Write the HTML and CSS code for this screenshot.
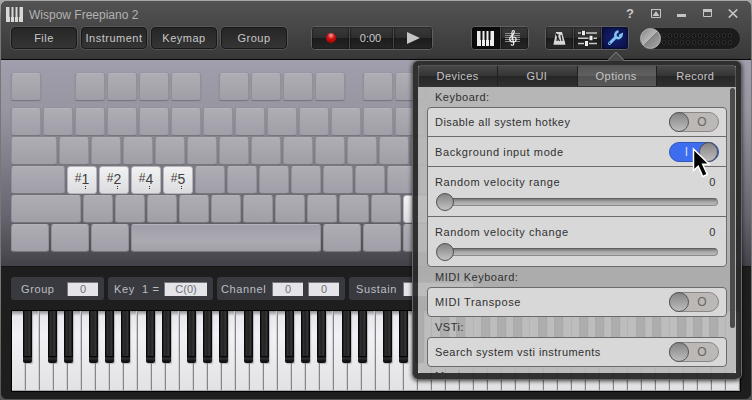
FILE: index.html
```html
<!DOCTYPE html>
<html lang="en">
<head>
<meta charset="utf-8">
<title>Wispow Freepiano 2</title>
<link rel="stylesheet" href="styles.css">
</head>
<body>
<div class="window">
  <header class="header">
    <div class="titlebar">
      <svg class="logo" width="17" height="15" viewBox="0 0 17 15"><path fill="#d8d8d8" d="M0 0h17v15H0z"/><path stroke="#555" d="M4.500 0v15M8.500 0v15M12.500 0v15"/><path stroke="#484848" stroke-width="2" d="M4.500 0v10M8.500 0v10M12.500 0v10"/></svg>
      <span class="title">Wispow Freepiano 2</span>
      <div class="winbtns">
        <span class="help">?</span>
        <svg width="10" height="9" viewBox="0 0 10 9"><path fill="none" stroke="#c4c4c4" d="M.5.5h9v8h-9z"/><path fill="#c4c4c4" d="M0 0h10v1H0zM5 2l3.500 5h-7z"/></svg>
        <svg width="9" height="9" viewBox="0 0 9 9"><path fill="#c4c4c4" d="M0 5h9v3H0z"/></svg>
        <svg width="9" height="9" viewBox="0 0 9 9"><path fill="none" stroke="#c4c4c4" d="M.5.5h8v7h-8z"/><path fill="#c4c4c4" d="M0 0h9v3H0z"/></svg>
        <svg width="10" height="9" viewBox="0 0 10 9"><path stroke="#c4c4c4" stroke-width="1.700" d="M.8.5l8.400 8M9.200.5l-8.400 8"/></svg>
      </div>
    </div>
    <div class="toolbar">
      <nav class="menu">
        <button>File</button><button>Instrument</button><button>Keymap</button><button>Group</button>
      </nav>
      <div class="segments transport">
        <div class="seg"><i class="rec"></i></div>
        <div class="seg time">0:00</div>
        <div class="seg"><svg width="13" height="12" viewBox="0 0 13 12"><path fill="#c6c6c6" d="M0 0l13 6-13 6z"/></svg></div>
      </div>
      <div class="segments views">
        <div class="seg on"><svg width="18" height="15" viewBox="0 0 18 15"><path fill="#eee" d="M0 0h17v15H0z"/><path stroke="#111" d="M4.500 0v15M8.500 0v15M12.500 0v15"/><path stroke="#111" stroke-width="2" d="M4.500 0v9M8.500 0v9M12.500 0v9"/></svg></div>
        <div class="seg"><svg width="18" height="18" viewBox="0 0 18 18" fill="none"><path stroke="#8a8a8a" d="M1 4.500h15M1 6.500h15M1 8.500h15M1 10.500h15M1 12.500h15"/><path stroke="#eee" stroke-width="1.200" d="M9.500 11c-2 0-2-3 .3-3 3.200 0 3.200 5-.5 5C5 13 4.600 9 7.500 7S11 1.500 9.500 1.500 7.500 4 8.200 7l1.500 7.500c.3 2-2.200 2.300-2.700.8"/></svg></div>
      </div>
      <div class="segments tools">
        <div class="seg"><svg width="13" height="13" viewBox="0 0 13 13"><path fill="#d8d8d8" d="M3 0h6l3.500 12.500H.5z"/><path stroke="#222" stroke-width="1.300" d="M6.500 9L3 1.500M4 9l1-7M9 9L8 3"/><path fill="#d8d8d8" d="M1 9.500h11v3H.8z"/></svg></div>
        <div class="seg"><svg width="19" height="16" viewBox="0 0 19 16"><path stroke="#c8c8c8" stroke-width="1.500" d="M0 3h19M0 8.200h19M0 13.500h19"/><path stroke="#222" stroke-width="5" d="M5.500 0v6M13 5v6M8.500 11v5"/><path stroke="#eee" stroke-width="3" d="M5.500 .8v4.500M13 5.800v4.500M8.500 11v5"/></svg></div>
        <div class="seg blue"><svg width="16" height="16" viewBox="0 0 16 16"><path stroke="#80c6f4" stroke-width="3" stroke-linecap="round" d="M2.500 13.500L9 7"/><path fill="none" stroke="#80c6f4" stroke-width="2.500" d="M11.500 1.300C8 2 7.500 6 9.500 7.500s5 0 5.200-3L12.200 5.800"/><circle cx="2.700" cy="13.300" r=".7" fill="#10205f"/></svg></div>
      </div>
      <div class="volume"><div class="dots"></div><i class="volknob"></i></div>
    </div>
  </header>

  <main class="keyboard" id="keyboard"></main>

  <section class="lower">
    <div class="status">
      <div class="stat group"><span>Group</span><b>0</b></div>
      <div class="stat key"><span>Key&nbsp; 1 =</span><b>C(0)</b></div>
      <div class="stat channel"><span>Channel</span><b>0</b><b>0</b></div>
      <div class="stat sustain"><span>Sustain</span><b></b></div>
    </div>
    <div class="piano" id="piano"></div>
  </section>
</div>

<aside class="popup">
  <svg class="notch" width="18" height="10" viewBox="0 0 18 10"><path fill="#4a4a4a" stroke="#858585" d="M0 10.500L9 1l9 9.500"/></svg>
  <div class="tabs"><span>Devices</span><span>GUI</span><span class="active">Options</span><span>Record</span></div>
  <div class="content">
    <h2>Keyboard:</h2>
    <div class="card">
      <div class="row"><span class="tight">Disable all system hotkey</span><div class="toggle"><i></i><em>O</em></div></div>
      <div class="row"><span>Background input mode</span><div class="toggle checked"><em>I</em><i></i></div></div>
      <div class="row tall"><div class="line"><span>Random velocity range</span><span>0</span></div><div class="slider"><i></i></div></div>
      <div class="row tall"><div class="line"><span>Random velocity change</span><span>0</span></div><div class="slider"><i></i></div></div>
    </div>
    <h2>MIDI Keyboard:</h2>
    <div class="card"><div class="row"><span>MIDI Transpose</span><div class="toggle"><i></i><em>O</em></div></div></div>
    <h2>VSTi:</h2>
    <div class="card"><div class="row"><span class="tight">Search system vsti instruments</span><div class="toggle"><i></i><em>O</em></div></div></div>
    <h2 class="last">Master:</h2>
    <div class="scrollbar"></div>
  </div>
</aside>
<svg class="cursor" width="20" height="32" viewBox="0 0 20 32"><path fill="#000" stroke="#fff" stroke-width="1.500" d="M1.500 2v21.500l4.700-4.300 4.600 10.300 4.500-2-4.600-10.200h6.500z"/></svg>
<script src="script.js"></script>
</body>
</html>
```

FILE: styles.css
```css
* { box-sizing: border-box; }
body {
  margin: 0; width: 752px; height: 400px; overflow: hidden; position: relative;
  background: linear-gradient(#a9abaa 0, #777 20px, #777 290px, #555 100%);
  font: 11px/14px "Liberation Sans", Arial, sans-serif;
  letter-spacing: .6px; color: #c8c8c8;
}
i, em, b { font-style: normal; font-weight: normal; display: block; }
.window {
  margin: 1px 1px 0; width: 750px; height: 398px; border-radius: 6px;
  overflow: hidden; display: flex; flex-direction: column; background: #1e1e1e; isolation: isolate;
}
.header { height: 59px; background: linear-gradient(#535353, #383838); border-bottom: 1px solid #080808; flex: none; }
.titlebar { height: 25px; display: flex; align-items: center; padding: 0 13px 0 5px; }
.logo { margin-top: 1px; }
.title { margin-left: 6px; font-size: 12px; letter-spacing: 0; color: #b5b1b1; margin-top: 2px; }
.winbtns { margin-left: auto; display: flex; align-items: center; gap: 16.500px; }
.help { font-size: 13px; font-weight: bold; letter-spacing: 0; }
.toolbar { display: flex; align-items: center; height: 24px; padding-left: 10px; }
.menu { display: flex; gap: 4px; }
.menu button {
  width: 66px; height: 22px; padding: 0; border: 1px solid #191919; border-radius: 4px;
  background: linear-gradient(#262626, #353535); box-shadow: 0 0 0 .6px #666;
  font: inherit; letter-spacing: .5px; color: #c8c8c8;
}
.segments { display: flex; height: 24px; border: 1px solid #606060; border-radius: 4px; overflow: hidden; background: #202020; }
.seg { display: flex; align-items: center; justify-content: center; background: linear-gradient(#393939 0, #2e2e2e 49%, #1b1b1b 50%, #272727); box-shadow: inset 0 0 2px #000; }
.seg + .seg { border-left: 1px solid #484848; }
.transport { width: 122px; margin-left: 24px; }
.transport .seg { width: 37px; }
.transport .seg.time { width: 44px; letter-spacing: 0; padding-right: 2px; }
.transport .seg:last-child { width: 39px; }
.rec { width: 10px; height: 10px; border-radius: 50%; background: radial-gradient(circle at 50% 25%, #f6a0a0, #d01010 40%, #900); }
.views { width: 58px; margin-left: 38px; }
.views .seg { width: 28px; }
.views .seg:last-child { padding-right: 3px; }
.seg.on { background: #0c0c0c; }
.tools { width: 84px; margin-left: 16px; }
.tools .seg { width: 28px; }
.seg.blue { background: radial-gradient(#142274, #090d3e); }
.volume { width: 102px; height: 23px; margin-left: 10px; border-radius: 12px; border: 1px solid #4b4b4b; background: #1b1b1b; display: flex; align-items: center; flex-direction: row-reverse; justify-content: flex-end; margin-top: 1px; }
.volknob { width: 21px; height: 21px; flex: none; border-radius: 50%; border: 1px solid #bbb; background: linear-gradient(135deg, #858585 0, #b8b8b8 49%, #858585 50%, #a8a8a8); }
.dots { width: 72px; height: 14px; background: radial-gradient(circle, #101010 1px, #333 1.800px, transparent 2.500px) 0 0 / 6px 7px; }

.keyboard { height: 206px; flex: none; padding: 13px 0 0 10px; overflow: hidden; background: linear-gradient(#a19fae 0, #97959f 25%, #67656f 75%, #4b4951 95%, #434148); }
.keys { display: flex; gap: 2px; width: 740px; height: 28px; margin-bottom: 1px; }
.keys:first-child { margin-bottom: 7px; }
.keycap {
  flex: none; width: 30px; border-radius: 3px; border: 1px solid #919097; border-top-color: #b4b3ba; border-bottom-color: #77767d;
  background: linear-gradient(#aeadb4, #a09fa7); box-shadow: 0 0 1px #66646e;
}
.keycap.wide { background: linear-gradient(#a19fa9, #abaab2 60%, #a2a1a8); }
.keycap.lit {
  border-color: #b5b4ba; background: linear-gradient(#f2f2f4, #dcdce0); color: #404040;
  font-size: 14px; line-height: 25px; letter-spacing: 0; display: flex; justify-content: center; position: relative;
}
.lit small { font-size: 12px; line-height: 23px; }
.lit::after { content: ""; position: absolute; left: 17px; bottom: 4px; width: 1px; height: 1px; background: #333; box-shadow: 0 -2px #333; }

.lower { flex: 1; background: #1e1e1e; border-top: 1px solid #151515; }
.status { display: flex; gap: 4px; padding: 10px 0 0 10px; }
.stat { height: 23px; border-radius: 3px; background: #393a40; display: flex; align-items: center; color: #bdbdc0; flex: none; }
.stat b { height: 14px; background: #e5e4e9; border: 1px solid #77777c; border-right: 0; border-bottom: 0; color: #6f6f73; text-align: center; line-height: 13px; letter-spacing: 0; width: 31px; }
.stat.group { width: 93px; padding: 0 6px 0 10px; justify-content: space-between; }
.stat.key { width: 105px; padding: 0 6px; justify-content: space-between; }
.stat.key b { width: 43px; }
.stat.channel { width: 128px; padding: 0 6px 0 4px; gap: 5px; }
.channel span { margin-right: auto; }
.stat.sustain { width: 130px; padding: 0 6px 0 7px; }
.stat.sustain b { margin-left: auto; width: 70px; }
.piano { margin: 10px 0 0 10px; width: 730px; height: 82px; border: 1px solid #000; display: flex; position: relative; }
.white { width: 14px; flex: none; background: linear-gradient(#8f8e93 0, #e8e7eb 5px, #f2f1f5 30%, #e2e2e5); border-right: 1px solid #858588; border-bottom: 1px solid #aaa; box-shadow: inset -1px 0 #d0d0d3; position: relative; }
.white.sharp::after {
  content: ""; position: absolute; z-index: 1; top: 0; left: var(--offset); width: 9px; height: 52px;
  background: linear-gradient(transparent 45px, #080808 45px, #080808 46px, #333 47px, #111 50px), linear-gradient(90deg, #080808 1px, #333 2px, #222 4px, #363636 7px, #080808 8px);
  border-radius: 0 0 2px 2px; box-shadow: 1px 1px 1px #8888;
}

.popup {
  position: absolute; left: 412px; top: 60px; width: 330px; height: 320px; padding: 4px 5px 6px;
  border: 1px solid #686868; border-top-color: #777; border-radius: 6px; box-shadow: 0 1px 4px #000b;
  display: flex; flex-direction: column; isolation: isolate;
}
.popup::before { content: ""; position: absolute; inset: 0; z-index: -1; border-radius: 5px; border: solid rgba(43,43,43,.96); border-width: 5px 5px 6px; }
.notch { position: absolute; left: 194px; top: -10px; }
.tabs { display: flex; height: 22px; flex: none; background: linear-gradient(#474747, #353535 49%, #262626 50%, #303030); border-radius: 4px 4px 0 0; border: 1px solid #555; border-bottom-color: #333; letter-spacing: .45px; }
.tabs span { flex: 1; text-align: center; line-height: 20px; color: #c4c4c4; padding-right: 1px; }
.tabs span + span { border-left: 1px solid #202020; }
.tabs .active { background: linear-gradient(#555, #606060 49%, #505050 50%, #5a5a5a); }
.content { flex: 1; min-height: 0; overflow: hidden; position: relative; background: rgba(184,184,184,.92); padding: 0 9px; border-radius: 0 0 3px 3px; color: #303030; }
h2 { margin: 0; height: 20px; font: inherit; line-height: 20px; padding-left: 8px; letter-spacing: .5px; }
h2.last { line-height: 18px; }
.card { border: 1px solid #6b6b6b; border-radius: 4px; background: #d8d8d8; width: 300px; }
.row { height: 28px; padding: 0 7px; display: flex; align-items: center; justify-content: space-between; }
.row + .row { border-top: 1px solid #6b6b6b; height: 30px; }
.row + .row.tall { display: block; height: 50px; padding-top: 8px; }
.tight { letter-spacing: .45px; }
.line { display: flex; justify-content: space-between; padding-right: 3px; }
.toggle { width: 50px; height: 20px; border-radius: 10px; border: 1px solid #898686; background: #bcb8b6; display: flex; align-items: center; flex: none; }
.toggle i { width: 20px; height: 20px; margin-left: -1px; border-radius: 50%; border: 1px solid #555; background: linear-gradient(#858585, #bdbdbd); }
.toggle em { width: 26px; text-align: center; font-size: 12px; color: #666; letter-spacing: 0; }
.toggle.checked { background: #3f6df0; border-color: #3155b8; }
.toggle.checked em { width: 30px; flex: none; color: #d7dfff; padding-left: 3px; }
.slider { height: 8px; margin: 9px 0 0 10px; width: 273px; border-radius: 4px; background: linear-gradient(#777, #aaa 3px, #bcbaba); border: 1px solid #8a8a8a; border-top-color: #606060; display: flex; align-items: center; }
.slider i { width: 18px; height: 18px; margin-left: -10px; flex: none; border-radius: 50%; border: 1px solid #505050; background: linear-gradient(#858585, #c2c2c2); }
.scrollbar { position: absolute; right: 1px; top: 1px; width: 5px; height: 240px; border-radius: 3px; background: #4c4c4c; }
.cursor { position: absolute; left: 692px; top: 147px; }
```

FILE: script.js
```js
// Each row lists key widths; a negative number is an empty gap.
const u = n => Array(n).fill(30);
const rows = [
  [30, -30, ...u(4), -14, ...u(4), -14, ...u(4)],
  u(14),
  [46, ...u(13)],
  [54, ...u(12)],
  [70, ...u(11)],
  [38, 38, 38, 190, 38, 38, 38]
];
const labels = { '3-1': '1', '3-2': '2', '3-3': '4', '3-4': '5', '4-11': '' };
document.getElementById('keyboard').innerHTML = rows.map((row, r) =>
  '<div class="keys">' + row.map((w, c) => {
    if (w < 0) return `<div style="width:${-w}px"></div>`;
    const label = labels[r + '-' + c];
    const cls = 'keycap' + (label !== undefined ? ' lit' : '') + (w > 100 ? ' wide' : '');
    return `<div class="${cls}" style="width:${w}px">${label ? '<small>#</small>' + label : ''}</div>`;
  }).join('') + '</div>').join('');

// White keys run from A to C; offsets place the sharp that follows each note.
const sharps = { 0: 11, 2: 8, 3: 10, 5: 7, 6: 9 };
document.getElementById('piano').innerHTML = Array.from({ length: 52 }, (_, i) => {
  const s = sharps[i % 7];
  return s && i < 51 ? `<div class="white sharp" style="--offset:${s}px"></div>` : '<div class="white"></div>';
}).join('');
```
